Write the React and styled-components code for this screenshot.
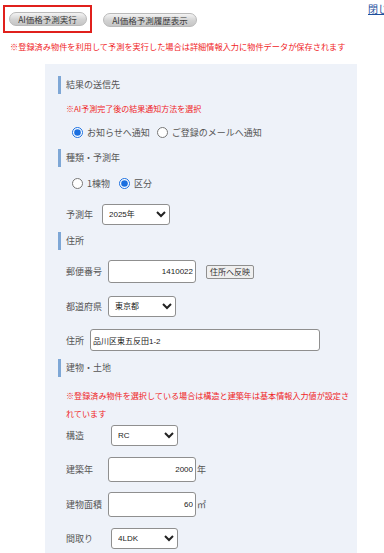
import React from 'react'
import styled, { createGlobalStyle } from 'styled-components'

const Global = createGlobalStyle`
  html, body {
    margin: 0;
    padding: 0;
    background: #fff;
    overflow: hidden;
  }
  body {
    font-family: "Noto Sans CJK JP", "Noto Sans", sans-serif;
    color: #555;
  }
`

const Page = styled.div`
  width: 384px;
  height: 553px;
  overflow: hidden;
`

const TopBar = styled.div`
  display: flex;
  align-items: flex-start;
  height: 38px;
  white-space: nowrap;
`

const Highlight = styled.div`
  margin: 5px 0 0 3px;
  width: 89px;
  height: 28px;
  box-sizing: border-box;
  border: 2px solid #e0201c;
  display: flex;
  align-items: center;
  justify-content: center;
  flex-shrink: 0;
`

const PillButton = styled.button`
  box-sizing: border-box;
  height: 14px;
  width: ${p => p.$w}px;
  margin: ${p => p.$m || '0'};
  padding: 0;
  border: 1px solid #b9b9b9;
  border-radius: 7px;
  background: linear-gradient(#f4f4f4, #d2d2d2 55%, #c6c6c6);
  color: #3a3a3a;
  font-family: inherit;
  font-size: 8.5px;
  line-height: 12px;
  flex-shrink: 0;
`

const CloseLink = styled.a`
  margin: 3px 0 0 171px;
  color: #1d4f9c;
  font-size: 10px;
  line-height: 11px;
  text-decoration: underline;
  flex-shrink: 0;
`

const TopNote = styled.p`
  margin: 1px 0 0 10px;
  color: #f0241f;
  font-size: 8.2px;
  line-height: 14px;
  white-space: nowrap;
`

const Panel = styled.div`
  margin: 11px 0 0 45px;
  width: 312px;
  height: 500px;
  background: #eef2f9;
  padding: 12px 0 0 13px;
  box-sizing: border-box;
`

const Heading = styled.div`
  margin-top: ${p => p.$mt || 0}px;
  height: 18px;
  border-left: 3px solid #7ea7d6;
  padding-left: 5px;
  font-size: 9px;
  line-height: 18px;
  color: #555;
`

const Note = styled.p`
  margin: ${p => p.$mt || 0}px 0 0 8px;
  color: #f0241f;
  font-size: ${p => p.$fs || 8}px;
  line-height: ${p => p.$lh || 14}px;
`

const RadioRow = styled.div`
  margin: ${p => p.$mt || 0}px 0 0 14px;
  display: flex;
  align-items: center;
  height: 16px;
  gap: ${p => p.$gap || 7}px;
`

const RadioLabel = styled.label`
  display: flex;
  align-items: center;
  gap: 4px;
  font-size: 9px;
  color: #555;
  input {
    margin: 0;
    width: 11px;
    height: 11px;
    accent-color: #1a6fe0;
  }
`

const Field = styled.div`
  margin: ${p => p.$mt || 0}px 0 0 8px;
  display: flex;
  align-items: center;
  height: ${p => p.$h || 20}px;
`

const Label = styled.span`
  width: ${p => p.$w}px;
  flex-shrink: 0;
  font-size: 9px;
  color: #555;
`

const Select = styled.select`
  width: ${p => p.$w || 68}px;
  height: 21px;
  border: 1px solid #8f8f8f;
  border-radius: 3px;
  background: #fff;
  font-family: "Liberation Sans", "Noto Sans CJK JP", sans-serif;
  font-size: 8px;
  color: #222;
  padding: 0 2px;
`

const TextInput = styled.input`
  width: ${p => p.$w}px;
  height: ${p => p.$h || 23}px;
  box-sizing: border-box;
  border: 1px solid #8f8f8f;
  border-radius: 3px;
  background: #fff;
  font-family: "Liberation Sans", "Noto Sans CJK JP", sans-serif;
  font-size: 8px;
  color: #222;
  padding: 0 2px;
  text-align: ${p => p.$align || 'left'};
`

const SmallButton = styled.button`
  margin-left: 10px;
  height: 14px;
  padding: 0 3px;
  border: 1px solid #8f8f8f;
  border-radius: 2px;
  background: #efefef;
  font-family: inherit;
  font-size: 8px;
  line-height: 12px;
  color: #333;
`

const Unit = styled.span`
  margin-left: 1px;
  font-size: 9px;
  color: #555;
`

export default function App() {
  return (
    <Page>
      <Global />
      <TopBar>
        <Highlight>
          <PillButton $w={78}>AI価格予測実行</PillButton>
        </Highlight>
        <PillButton $w={94} $m="13px 0 0 11px">AI価格予測履歴表示</PillButton>
        <CloseLink href="#">閉じる</CloseLink>
      </TopBar>
      <TopNote>※登録済み物件を利用して予測を実行した場合は詳細情報入力に物件データが保存されます</TopNote>

      <Panel>
        <Heading>結果の送信先</Heading>
        <Note $mt={8}>※AI予測完了後の結果通知方法を選択</Note>
        <RadioRow $mt={8} $gap={7}>
          <RadioLabel><input type="radio" name="notify" defaultChecked />お知らせへ通知</RadioLabel>
          <RadioLabel><input type="radio" name="notify" />ご登録のメールへ通知</RadioLabel>
        </RadioRow>

        <Heading $mt={9}>種類・予測年</Heading>
        <RadioRow $mt={8} $gap={9}>
          <RadioLabel><input type="radio" name="kind" />1棟物</RadioLabel>
          <RadioLabel><input type="radio" name="kind" defaultChecked />区分</RadioLabel>
        </RadioRow>
        <Field $mt={13} $h={20}>
          <Label $w={36}>予測年</Label>
          <Select $w={68} defaultValue="2025"><option value="2025">2025年</option></Select>
        </Field>

        <Heading $mt={8}>住所</Heading>
        <Field $mt={10} $h={23}>
          <Label $w={42}>郵便番号</Label>
          <TextInput $w={88} $align="right" defaultValue="1410022" />
          <SmallButton>住所へ反映</SmallButton>
        </Field>
        <Field $mt={13} $h={21}>
          <Label $w={42}>都道府県</Label>
          <Select $w={68} defaultValue="tokyo"><option value="tokyo">東京都</option></Select>
        </Field>
        <Field $mt={12} $h={22}>
          <Label $w={24}>住所</Label>
          <TextInput $w={230} $h={22} defaultValue="品川区東五反田1-2" />
        </Field>

        <Heading $mt={8}>建物・土地</Heading>
        <Note $mt={10} $fs={8.1} $lh={18}>※登録済み物件を選択している場合は構造と建築年は基本情報入力値が設定されています</Note>
        <Field $mt={2} $h={21}>
          <Label $w={45}>構造</Label>
          <Select $w={67} defaultValue="RC"><option value="RC">RC</option></Select>
        </Field>
        <Field $mt={11} $h={25}>
          <Label $w={42}>建築年</Label>
          <TextInput $w={88} $h={25} $align="right" defaultValue="2000" />
          <Unit>年</Unit>
        </Field>
        <Field $mt={10} $h={25}>
          <Label $w={42}>建物面積</Label>
          <TextInput $w={88} $h={25} $align="right" defaultValue="60" />
          <Unit>㎡</Unit>
        </Field>
        <Field $mt={11} $h={21}>
          <Label $w={45}>間取り</Label>
          <Select $w={67} defaultValue="4LDK"><option value="4LDK">4LDK</option></Select>
        </Field>
      </Panel>
    </Page>
  )
}
